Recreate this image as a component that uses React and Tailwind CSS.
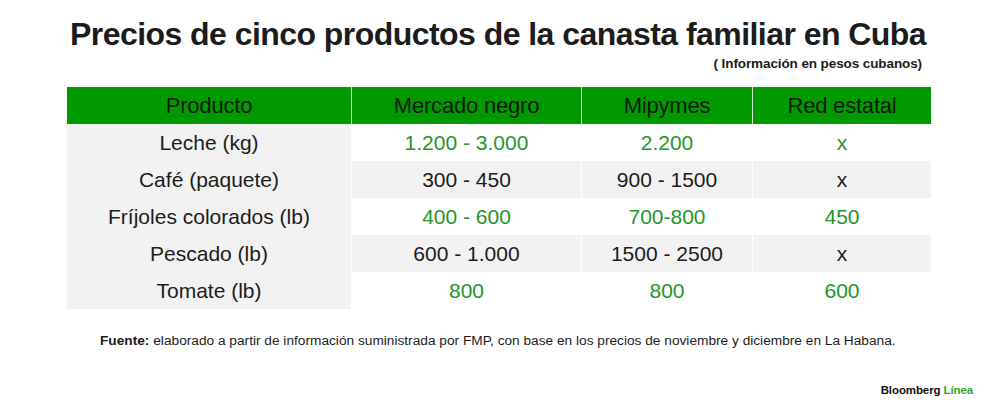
const rows = [
  { p: "Leche (kg)", m: "1.200 - 3.000", y: "2.200", r: "x", green: true },
  { p: "Café (paquete)", m: "300 - 450", y: "900 - 1500", r: "x", green: false },
  { p: "Fríjoles colorados (lb)", m: "400 - 600", y: "700-800", r: "450", green: true },
  { p: "Pescado (lb)", m: "600 - 1.000", y: "1500 - 2500", r: "x", green: false },
  { p: "Tomate (lb)", m: "800", y: "800", r: "600", green: true },
];

export default function App() {
  return (
    <div className="w-[1000px] h-[420px] bg-white overflow-hidden" style={{ fontFamily: '"Liberation Sans", Arial, sans-serif' }}>
      <div className="pt-[12px] pl-[70px] pr-[76px]">
        <h1 className="text-[32px] leading-[44px] font-bold text-[#1c1c1c] tracking-[-0.55px] whitespace-nowrap">
          Precios de cinco productos de la canasta familiar en Cuba
        </h1>
        <div className="text-right text-[13.5px] leading-[16px] font-bold text-[#1c1c1c] tracking-[-0.1px] pr-[2px]">
          ( Información en pesos cubanos)
        </div>
      </div>
      <div className="ml-[67px] w-[864px] mt-[15px] flex flex-col">
        <div className="grid grid-cols-[284px_229px_170px_178px] h-[37px] bg-[#cfe9cf] gap-x-[1px]">
          {["Producto", "Mercado negro", "Mipymes", "Red estatal"].map((h, i) => (
            <div key={i} className="flex items-center justify-center bg-[#009a00] text-[22px] text-[#0d1a0d] tracking-[-0.2px]">
              {h}
            </div>
          ))}
        </div>
        {rows.map((row, idx) => {
          const rowBg = idx % 2 === 1 ? "bg-[#f2f2f2]" : "bg-white";
          const color = row.green ? "text-[#23962a]" : "text-[#1c1c1c]";
          return (
            <div key={idx} className="grid grid-cols-[284px_229px_170px_178px] h-[37px] gap-x-[1px] bg-white">
              <div className="flex items-center justify-center bg-[#f2f2f2] text-[21px] text-[#1c1c1c]">
                {row.p}
              </div>
              <div className={`flex items-center justify-center ${rowBg} text-[21px] ${color}`}>
                {row.m}
              </div>
              <div className={`flex items-center justify-center ${rowBg} text-[21px] ${color}`}>
                {row.y}
              </div>
              <div className={`flex items-center justify-center ${rowBg} text-[21px] ${color}`}>
                {row.r}
              </div>
            </div>
          );
        })}
      </div>
      <div className="pl-[100px] mt-[24px] text-[13.7px] leading-[16px] text-[#1c1c1c] whitespace-nowrap">
        <span className="font-bold">Fuente:</span>{" "}
        <span>elaborado a partir de información suministrada por FMP, con base en los precios de noviembre y diciembre en La Habana.</span>
      </div>
      <div className="flex justify-end pr-[27px] mt-[34px] text-[11.5px] leading-[14px] font-bold tracking-[-0.1px]">
        <span className="text-[#111]">Bloomberg</span>
        <span className="text-[#2ba82b] ml-[3px]">Línea</span>
      </div>
    </div>
  );
}
